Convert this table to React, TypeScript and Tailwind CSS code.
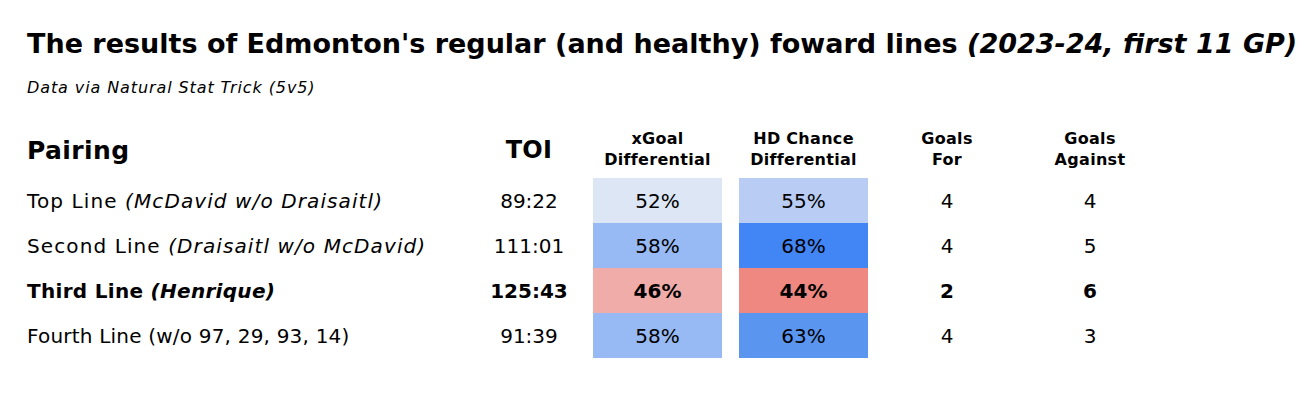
import React from 'react';

type Row = {
  name: string;
  note: string;
  noteItalic: boolean;
  toi: string;
  xg: string;
  xgBg: string;
  hd: string;
  hdBg: string;
  gf: string;
  ga: string;
  track: string;
  bold?: boolean;
};

const rows: Row[] = [
  { name: 'Top Line', note: '(McDavid w/o Draisaitl)', noteItalic: true, toi: '89:22', xg: '52%', xgBg: 'bg-[#dce6f4]', hd: '55%', hdBg: 'bg-[#b9cdf4]', gf: '4', ga: '4', track: 'tracking-[1.1px]' },
  { name: 'Second Line', note: '(Draisaitl w/o McDavid)', noteItalic: true, toi: '111:01', xg: '58%', xgBg: 'bg-[#97b9f4]', hd: '68%', hdBg: 'bg-[#4285f4]', gf: '4', ga: '5', track: 'tracking-[1.1px]' },
  { name: 'Third Line', note: '(Henrique)', noteItalic: true, toi: '125:43', xg: '46%', xgBg: 'bg-[#f0aca8]', hd: '44%', hdBg: 'bg-[#ee8880]', gf: '2', ga: '6', track: 'tracking-[0.3px]', bold: true },
  { name: 'Fourth Line', note: '(w/o 97, 29, 93, 14)', noteItalic: false, toi: '91:39', xg: '58%', xgBg: 'bg-[#97b9f4]', hd: '63%', hdBg: 'bg-[#5a95f0]', gf: '4', ga: '3', track: 'tracking-[0.2px]' },
];

export default function App() {
  return (
    <div className="w-[1306px] h-[414px] bg-white text-black pl-[27px] pt-[26px]" style={{ fontFamily: '"DejaVu Sans", sans-serif' }}>
      <h1 className="text-[27px] leading-[36px] font-bold whitespace-nowrap">
        The results of Edmonton's regular (and healthy) foward lines <i>(2023-24, first 11 GP)</i>
      </h1>
      <p className="text-[16px] leading-[20px] italic tracking-[0.9px] mt-[16px] whitespace-nowrap">Data via Natural Stat Trick (5v5)</p>

      <div className="mt-[30px]">
        <div className="flex items-start h-[50px] font-bold text-[16px] leading-[21px] tracking-[0.3px] text-center">
          <div className="w-[453px] h-[44px] flex items-center text-left text-[25px] tracking-[0.4px]">Pairing</div>
          <div className="w-[98px] h-[44px] mr-[15px] flex items-center justify-center text-[24px]">TOI</div>
          <div className="w-[129px] mr-[17px]">xGoal<br />Differential</div>
          <div className="w-[129px]">HD Chance<br />Differential</div>
          <div className="w-[158px]">Goals<br />For</div>
          <div className="w-[128px]">Goals<br />Against</div>
        </div>
        {rows.map((r) => (
          <div key={r.name} className={`flex items-stretch h-[45px] text-[20px] text-center ${r.bold ? 'font-bold' : ''}`}>
            <div className={`w-[453px] text-left flex items-center whitespace-nowrap ${r.track}`}>
              {r.name}&nbsp;{r.noteItalic ? <i>{r.note}</i> : r.note}
            </div>
            <div className="w-[98px] mr-[15px] flex items-center justify-center">{r.toi}</div>
            <div className={`w-[129px] mr-[17px] flex items-center justify-center ${r.xgBg}`}>{r.xg}</div>
            <div className={`w-[129px] flex items-center justify-center ${r.hdBg}`}>{r.hd}</div>
            <div className="w-[158px] flex items-center justify-center">{r.gf}</div>
            <div className="w-[128px] flex items-center justify-center">{r.ga}</div>
          </div>
        ))}
      </div>
    </div>
  );
}
